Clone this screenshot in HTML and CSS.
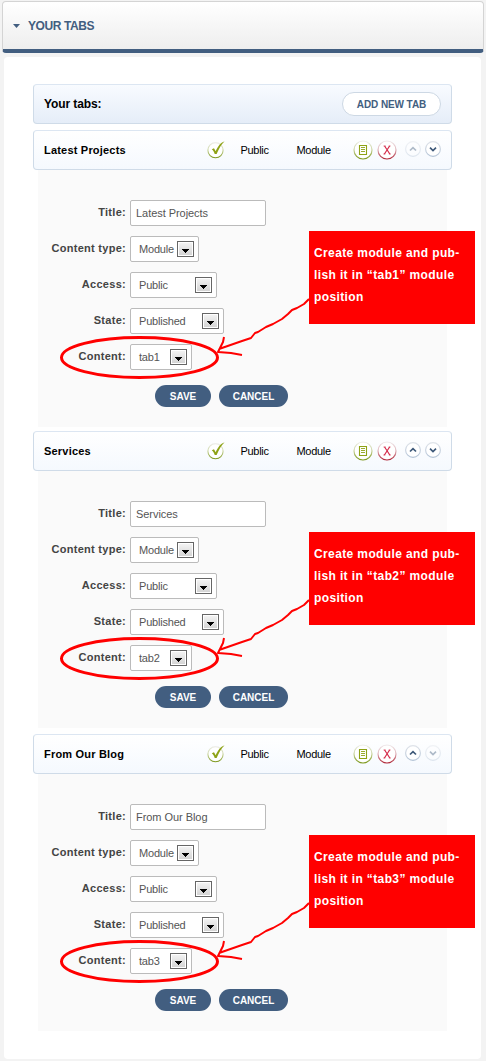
FILE: index.html
```html
<!DOCTYPE html>
<html lang="en">
<head>
<meta charset="utf-8">
<title>Your tabs</title>
<link rel="stylesheet" href="styles.css">
</head>
<body>
<header class="section-head"><svg class="caret" width="7" height="4"><path d="M0 0H7L3.5 4Z"/></svg><h1>YOUR TABS</h1></header>
<main class="panel">
  <div class="bar list-head"><h2>Your tabs:</h2><button class="add">ADD NEW TAB</button></div>
  <div id="tabs"></div>
</main>
<svg width="0" height="0" class="defs">
  <defs>
    <linearGradient id="green" x1="0" y1="0" x2="0" y2="1"><stop offset="0" stop-color="#eeeeea"/><stop offset=".5" stop-color="#c8d39c"/><stop offset="1" stop-color="#7d981c"/></linearGradient>
    <linearGradient id="red" x1="0" y1="0" x2="0" y2="1"><stop offset="0" stop-color="#efe9ea"/><stop offset=".5" stop-color="#deb0b7"/><stop offset="1" stop-color="#b02738"/></linearGradient>
    <linearGradient id="blue" x1="0" y1="0" x2="0" y2="1"><stop offset="0" stop-color="#dfe3e9"/><stop offset="1" stop-color="#b3c3d6"/></linearGradient>
  </defs>
</svg>
<script src="tabs.js"></script>
</body>
</html>
```
FILE: styles.css
```css
* { box-sizing: border-box; }
body { margin: 0; padding: 1px 2px 2px; background: #f3f3f3; font-family: "Liberation Sans", Arial, sans-serif; color: #000; }
h1, h2, h3, p { margin: 0; }
button { font-family: inherit; padding: 0; }
.defs { position: absolute; }
.section-head { width: 482px; height: 52px; display: flex; align-items: center; gap: 8px; padding: 1px 0 0 10px; border: 1px solid #d4d4d4; border-bottom: 4px solid #425e80; border-radius: 4px; background: linear-gradient(#fff, #eee); }
.section-head h1 { font-size: 12px; color: #425e80; letter-spacing: -.4px; }
.caret { fill: #425e80; }
.panel { width: 477px; height: 1002px; margin: 4px 0 0 2px; padding: 27px 29px 0; border-radius: 4px; background: #fff; }
.bar { width: 419px; height: 40px; border: 1px solid #cfdbe8; border-top-color: #dce6f2; border-radius: 4px; display: flex; align-items: center; padding: 0 10px; background: linear-gradient(#fff, #f5f9fe); }
.list-head { justify-content: space-between; background: linear-gradient(#f8fbff, #e5edf8); margin-bottom: 6px; }
.list-head h2 { font-size: 12px; letter-spacing: -.1px; }
.add { width: 99px; height: 24px; border: 1px solid #cdd8e4; border-radius: 12px; background: #fff; color: #425e80; font-size: 10px; font-weight: bold; letter-spacing: -.1px; }
.bar h3 { width: 161px; flex: none; font-size: 11px; letter-spacing: .2px; }
.check { flex: none; width: 20px; height: 20px; margin: 0 14px 0 1.5px; }
.cell { flex: none; width: 56px; font-size: 11px; letter-spacing: -.3px; }
.round { flex: none; width: 20px; height: 20px; margin: -1px 4px 0 0; }
.move { flex: none; width: 16px; height: 16px; margin: -2px 4px 0 0; }
.round + .move { margin-left: 4px; }
.off { opacity: .4; }
.form { position: relative; width: 409px; height: 257px; margin-left: 5px; padding-top: 30px; background: #fafafa; display: flex; flex-direction: column; gap: 10px; }
.gap4 { margin-bottom: 4px; }
.gap6 { margin-bottom: 6px; }
.row { display: flex; height: 26px; }
.row label { width: 88px; margin-right: 4px; text-align: right; font-size: 11px; line-height: 24px; font-weight: bold; letter-spacing: .28px; color: #444; white-space: nowrap; }
.field { height: 26px; display: flex; align-items: center; justify-content: space-between; padding: 0 4px 1px 8px; border: 1px solid #bbb; border-radius: 2px; background: #fff; font-size: 11px; letter-spacing: -.2px; color: #555; }
.title { width: 136px; padding-left: 5px; letter-spacing: -.05px; }
.type { width: 69px; }
.access { width: 87px; }
.state { width: 94px; }
.content { width: 62px; }
.drop { width: 17px; height: 16px; margin-top: 1px; border: 1px solid #666; box-shadow: inset 0 0 0 1px #fff; background: linear-gradient(#f5f5f5, #d2d2d2); display: block; }
.actions { display: flex; gap: 8px; margin: 5px 0 0 117px; }
.actions button { width: 56px; height: 22px; border: 0; border-radius: 11px; background: #425e80; color: #fff; font-size: 10px; font-weight: bold; }
.actions .cancel { width: 69px; }
.mark { position: absolute; left: 0; top: 120px; overflow: visible; pointer-events: none; fill: none; stroke: red; }
.note { position: absolute; left: 271px; top: 61px; width: 166px; height: 93px; padding: 11px 0 0 5px; background: red; color: #fff; font-size: 12px; line-height: 22px; font-weight: bold; letter-spacing: .38px; white-space: nowrap; }
```
FILE: tabs.js
```js
const ring = (color) => `<circle cx="10" cy="10" r="9" fill="#fff" stroke="url(#${color})" stroke-width="1.2"/>`;
const move = (path, off) => `<svg class="move ${off ? "off" : ""}" viewBox="0 0 16 16"><circle cx="8" cy="8" r="7.4" fill="#fff" stroke="url(#blue)" stroke-width="1.1"/><path d="${path}" fill="none" stroke="#3d5878" stroke-width="1.7"/></svg>`;
const select = (label, cls, value) => `<div class="row"><label>${label}:</label><div class="field ${cls}"><span>${value}</span><svg class="drop" viewBox="0 0 15 14"><path d="M4 7H11V8H10V9H9V10H8V11H7V10H6V9H5V8H4Z" fill="#000"/></svg></div></div>`;
const names = ["Latest Projects", "Services", "From Our Blog"];
const gaps = ["gap4", "gap6", ""];

document.getElementById("tabs").innerHTML = names.map((name, i) => `
<section>
  <div class="bar">
    <h3>${name}</h3>
    <svg class="check" viewBox="0 0 20 20"><circle cx="8.5" cy="10.2" r="7.6" fill="#fff" stroke="url(#green)" stroke-width="1.1"/><path d="M4.8 9.2L7 8.2L8.7 11.2C10.7 6.7 13.4 2.6 17.6 1.2C14 4.4 11.8 9 9.6 14H7.7C7.3 12.4 6.3 10.5 4.8 9.2Z" fill="#8ea216"/></svg>
    <span class="cell">Public</span><span class="cell">Module</span>
    <svg class="round" viewBox="0 0 20 20">${ring("green")}<path d="M6.5 5.5H13.5V14.5H6.5Z" fill="none" stroke="#8ea216" stroke-width="1.1"/><path d="M8 7.5H12M8 9.5H12M8 11.5H12" fill="none" stroke="#8ea216" stroke-width=".9"/></svg>
    <svg class="round" viewBox="0 0 20 20">${ring("red")}<path d="M7.6 6L12.8 14M12.6 6L7.4 14" stroke="#d52a49" stroke-width="1.2"/><path d="M6.6 6H8.6M11.7 6H13.5M6.4 14H8.3M11.9 14H13.8" stroke="#d52a49" stroke-width=".8"/></svg>
    ${move("M5 9.5L8 6.7L11 9.5", i === 0)}${move("M5 6.7L8 9.5L11 6.7", i === 2)}
  </div>
  <div class="form ${gaps[i]}">
    <div class="row"><label>Title:</label><div class="field title">${name}</div></div>
    ${select("Content type", "type", "Module")}
    ${select("Access", "access", "Public")}
    ${select("State", "state", "Published")}
    ${select("Content", "content", "tab" + (i + 1))}
    <div class="actions"><button>SAVE</button><button class="cancel">CANCEL</button></div>
    <svg class="mark" width="280" height="95"><ellipse cx="101.5" cy="67.5" rx="78" ry="20" stroke-width="3"/><path d="M271 9L266 14L259 18L254 20L250 24L244 29L235 34L228 37L220 42L217 43L213 48L204 51L181 59M186 47L185 52L181 60L180 62L193 63L204 65" stroke-width="2" stroke-linejoin="round"/></svg>
    <p class="note">Create module and pub-<br>lish it in “tab${i + 1}” module<br>position</p>
  </div>
</section>`).join("");
```
